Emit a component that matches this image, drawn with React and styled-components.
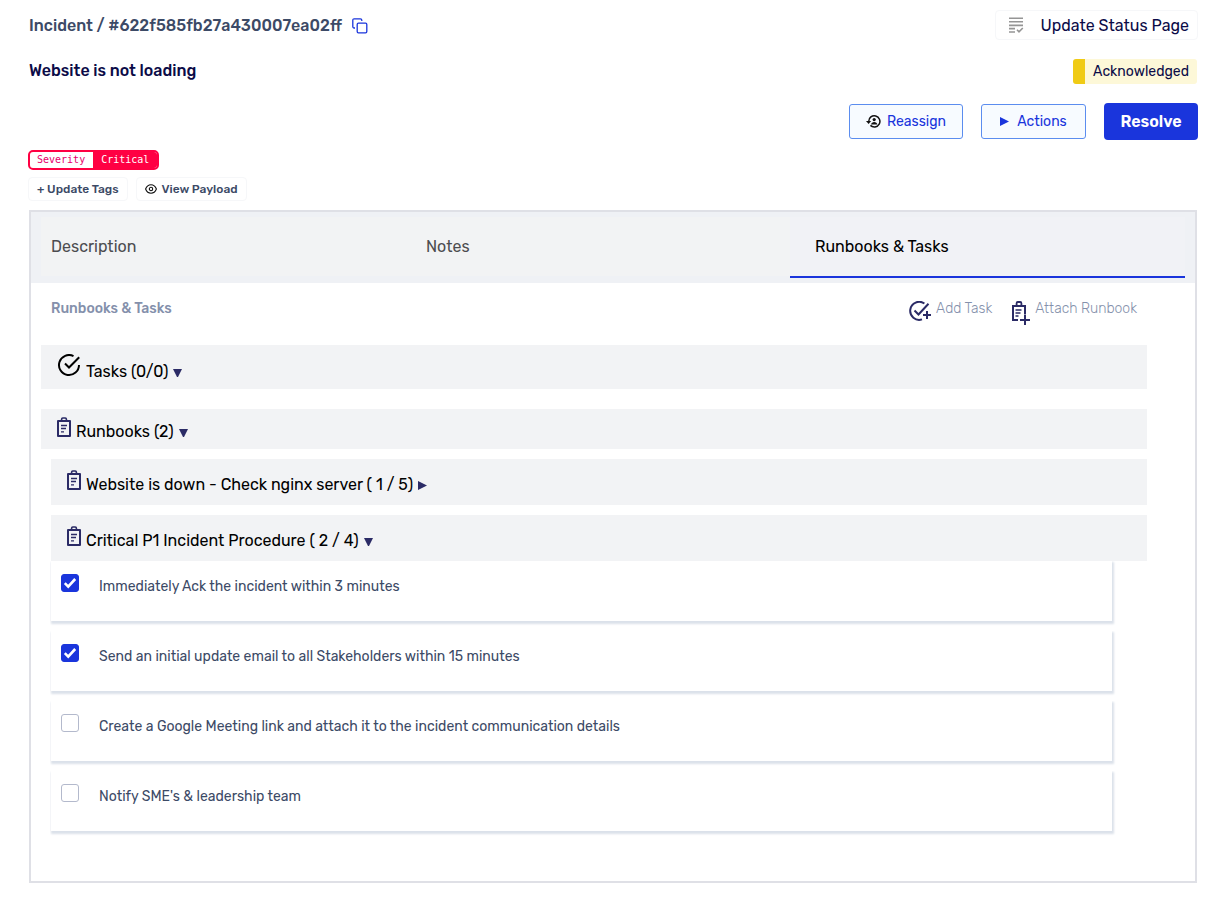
import React, { useState } from "react";
import styled, { createGlobalStyle, css } from "styled-components";

const GlobalStyle = createGlobalStyle`
  * { box-sizing: border-box; }
  body {
    margin: 0;
    background: #fff;
    color: #000;
    font-family: Rubik, Roboto, "Liberation Sans", sans-serif;
  }
  button { font-family: inherit; cursor: pointer; }
  svg { display: block; flex: none; }
`;

const Page = styled.main`
  padding: 10px 11px 20px 29px;
`;

const Row = styled.div`
  display: flex;
  align-items: ${(p) => p.$align || "center"};
  justify-content: ${(p) => (p.$end ? "flex-end" : "space-between")};
  gap: 18px;
  min-height: ${(p) => p.$height}px;
  margin-bottom: ${(p) => p.$gap}px;
`;

const Crumb = styled.div`
  display: flex;
  align-items: center;
  gap: 10px;
  padding-top: 2px;
  font-size: 16px;
  line-height: 20px;
  font-weight: 500;
  color: #3c4a66;
`;

const IconButton = styled.button`
  padding: 0;
  border: 0;
  background: none;
`;

const Title = styled.h1`
  margin: 0;
  font-size: 16px;
  line-height: 24px;
  font-weight: 500;
  color: #0b0b47;
`;

const GhostButton = styled.button`
  display: flex;
  align-items: center;
  background: #fff;
  border: 1px solid #f6f7f9;
  border-radius: 4px;
  ${(p) =>
    p.$small
      ? css`
          gap: 5px;
          height: 24px;
          padding: 0 8px;
          font-size: 12px;
          font-weight: 500;
          color: #3c4a66;
        `
      : css`
          gap: 16px;
          height: 30px;
          padding: 0 8px 0 12px;
          font-size: 16px;
          color: #0b0b47;
        `}
`;

const Status = styled.span`
  margin-right: 1px;
  padding: 0 8px;
  border-left: 12px solid #f0cb15;
  border-radius: 3px;
  background: #fdf8d8;
  font-size: 14px;
  line-height: 25px;
  color: #0b0b47;
`;

const OutlineButton = styled.button`
  display: flex;
  align-items: center;
  justify-content: center;
  gap: ${(p) => p.$gap}px;
  height: 35px;
  min-width: ${(p) => p.$width}px;
  padding-bottom: 2px;
  border: 1px solid #5b8def;
  border-radius: 3px;
  background: #f7fbff;
  font-size: 14px;
  color: #1a35dc;
`;

const SolidButton = styled.button`
  height: 37px;
  min-width: 94px;
  border: 0;
  border-radius: 4px;
  background: #1a35dc;
  font-size: 16px;
  font-weight: 600;
  color: #fff;
`;

const Tag = styled.div`
  display: flex;
  width: max-content;
  margin: 0 0 7px -1px;
  overflow: hidden;
  border: 2px solid #ff0043;
  border-radius: 5px;
  font-family: "DejaVu Sans Mono", monospace;
  font-size: 10px;
  line-height: 16px;
`;

const TagName = styled.span`
  padding: 0 8px 0 7px;
  color: #e6006c;
`;

const TagValue = styled.span`
  padding: 0 8px;
  background: #ff0043;
  color: #fff;
`;

const TagActions = styled.div`
  display: flex;
  gap: 8px;
  margin: 0 0 9px -1px;
`;

const Panel = styled.section`
  margin-right: 1px;
  border: 2px solid #dfe0e6;
`;

const Tabs = styled.div`
  display: grid;
  grid-template-columns: 360fr 389fr 395fr;
  padding: 5px 10px;
  background: #eff1f5;
`;

const Tab = styled.button`
  height: 61px;
  padding: 0 25px;
  border: 0;
  border-bottom: 2px solid ${(p) => (p.$active ? "#1a35dc" : "transparent")};
  background: ${(p) => (p.$active ? "#f1f2f6" : "#f2f3f4")};
  background-clip: padding-box;
  font-size: 16px;
  text-align: left;
  color: ${(p) => (p.$active ? "#000" : "#4c4c4f")};
  &:first-child { padding-left: 10px; }
`;

const Body = styled.div`
  padding: 0 48px 50px 10px;
`;

const BodyHead = styled.div`
  display: flex;
  align-items: flex-start;
  justify-content: space-between;
  height: 62px;
  padding: 15px 10px 0;
`;

const BodyTitle = styled.h2`
  margin: 0;
  font-size: 14px;
  line-height: 22px;
  font-weight: 500;
  color: #8490ab;
`;

const Links = styled.div`
  display: flex;
  gap: 19px;
`;

const LinkButton = styled.button`
  display: flex;
  align-items: flex-start;
  gap: 5px;
  padding: 0;
  border: 0;
  background: none;
  font-size: 14px;
  line-height: 22px;
  font-weight: 300;
  color: #8490ab;
  svg { margin-top: 3px; }
`;

const Bar = styled.button`
  display: flex;
  align-items: flex-end;
  width: 100%;
  gap: 4px;
  height: ${(p) => p.$height}px;
  padding: 0 15px ${(p) => p.$bottom}px;
  border: 0;
  background: #f2f3f5;
  font-size: 16px;
  line-height: 20px;
  text-align: left;
  color: #000;
  > svg { margin-bottom: 5px; }
  > svg:last-child { margin-left: 1px; }
`;

const Group = styled.div`
  display: grid;
  gap: 10px;
  margin-top: 20px;
`;

const Nested = styled.div`
  padding-left: 10px;
`;

const CheckList = styled.ul`
  display: grid;
  gap: 10px;
  margin: 0 35px 0 0;
  padding: 0;
  list-style: none;
`;

const CheckItem = styled.label`
  display: flex;
  align-items: flex-start;
  gap: 20px;
  height: 60px;
  padding: 13px 10px 0;
  background: #fff;
  box-shadow: 1px 2px 2px 1px #dbe1ea;
  clip-path: inset(0 -6px -8px -1px);
  font-size: 14px;
  line-height: 26px;
  color: #3c4a66;
`;

const Box = styled.span`
  display: grid;
  > * { grid-area: 1 / 1; }
  svg { pointer-events: none; }
`;

const Check = styled.input`
  appearance: none;
  width: 18px;
  height: 18px;
  margin: 0;
  border: 1px solid #b3b9cc;
  border-radius: 3px;
  background: #fff;
  &:checked {
    border-color: #1a35dc;
    background: #1a35dc;
  }
`;

const CopyIcon = () => (
  <svg width="16" height="16" viewBox="0 0 16 16" fill="none" stroke="#1a35dc" strokeWidth="1.3">
    <rect x="5.2" y="5.2" width="9.6" height="9.6" rx="1.2" />
    <path d="M3 10H2.2Q.8 10 .8 8.6V2.2Q.8.8 2.2.8h6.2Q9.8.8 9.8 2.2V3" />
  </svg>
);

const ListIcon = () => (
  <svg width="16" height="16" viewBox="0 0 16 16" fill="none" stroke="#959595" strokeWidth="1.6">
    <path d="M1 1.2h14M1 4.8h14M1 8.4h14M1 11.6h6M1 15h6M9 12.8l2 2 3.8-3.8" />
  </svg>
);

const ReassignIcon = () => (
  <svg width="15" height="14" viewBox="0 0 15 14" fill="none" stroke="#111" strokeWidth="1.5">
    <path d="M2.7 7.4A5.6 5.6 0 1 1 4.4 11.4" />
    <path d="M0 7.1h5.2L2.6 10z" fill="#111" stroke="none" />
    <circle cx="8.2" cy="5.6" r="1.6" fill="#111" stroke="none" />
    <path d="M5 10.6c.4-3.6 6-3.6 6.4 0z" fill="#111" stroke="none" />
  </svg>
);

const EyeIcon = () => (
  <svg width="12" height="12" viewBox="0 0 12 12" fill="none" stroke="#111" strokeWidth="1.1">
    <path d="M.6 6C2.8.4 9.2.4 11.4 6 9.2 11.6 2.8 11.6.6 6z" />
    <circle cx="6" cy="6" r="1.7" />
  </svg>
);

const TaskIcon = () => (
  <svg width="26" height="23" viewBox="-2 -1 26 23" fill="none" stroke="#000" strokeWidth="2">
    <path d="M15.5 1.1A10 10 0 1 0 21 10M7 8.5l4 4L21.2 2.2" />
  </svg>
);

const AddTaskIcon = () => (
  <svg width="22" height="20" viewBox="0 0 22 20" fill="none" stroke="#2b2b66" strokeWidth="2">
    <path d="M15.4 2.5A9 9 0 1 0 13 18.4M5.5 9.5l4 4L19.5 2.8M18 10v8M14 14h8" />
  </svg>
);

const ClipboardIcon = () => (
  <svg width="16" height="20" viewBox="0 0 16 20" fill="none" stroke="#2b2b66" strokeWidth="2">
    <path d="M2 4h12v15H2z" strokeLinejoin="round" />
    <path d="M5.6 4V2.2Q5.6 1 6.8 1h2.4q1.2 0 1.2 1.2V4" strokeWidth="1.6" />
    <path d="M5 8.5h6M5 11.5h5M5 14.8h3" strokeWidth="1.3" />
  </svg>
);

const AttachIcon = () => (
  <svg width="19" height="24" viewBox="0 0 19 24" fill="none" stroke="#2b2b66" strokeWidth="2">
    <path d="M7 19H2V5h12v8.5M14 14v10M9 19h10" />
    <path d="M5.6 4V2.2Q5.6 1 6.8 1h2.4q1.2 0 1.2 1.2V4" strokeWidth="1.8" />
    <path d="M4.5 9h6M4.5 12h5M4.5 15h3" strokeWidth="1.3" />
  </svg>
);

const Caret = ({ right, color = "#2b2b66" }) => (
  <svg width="9" height="9" viewBox="0 0 9 9" fill={color}>
    <path d={right ? "M0 0l9 4.5L0 9z" : "M0 1h9L5 9H4z"} />
  </svg>
);

const Tick = () => (
  <svg width="18" height="18" viewBox="0 0 18 18" fill="none" stroke="#fff" strokeWidth="2.6">
    <path d="M3.8 9.2l3.4 3.4 7-7.6" />
  </svg>
);

const INITIAL_STEPS = [
  { text: "Immediately Ack the incident within 3 minutes", done: true },
  { text: "Send an initial update email to all Stakeholders within 15 minutes", done: true },
  { text: "Create a Google Meeting link and attach it to the incident communication details", done: false },
  { text: "Notify SME's & leadership team", done: false },
];

const TABS = ["Description", "Notes", "Runbooks & Tasks"];

export default function App() {
  const [steps, setSteps] = useState(INITIAL_STEPS);
  const [tab, setTab] = useState(2);
  const toggle = (index) =>
    setSteps(steps.map((s, i) => (i === index ? { ...s, done: !s.done } : s)));

  return (
    <>
      <GlobalStyle />
      <Page>
        <Row $height={30} $gap={19}>
          <Crumb>
            Incident / #622f585fb27a430007ea02ff
            <IconButton aria-label="Copy incident id"><CopyIcon /></IconButton>
          </Crumb>
          <GhostButton><ListIcon />Update Status Page</GhostButton>
        </Row>
        <Row $height={25} $gap={19} $align="flex-start">
          <Title>Website is not loading</Title>
          <Status>Acknowledged</Status>
        </Row>
        <Row $height={37} $gap={10} $end>
          <OutlineButton $width={114} $gap={6}><ReassignIcon />Reassign</OutlineButton>
          <OutlineButton $width={105} $gap={8}><Caret right color="#1a35dc" />Actions</OutlineButton>
          <SolidButton>Resolve</SolidButton>
        </Row>
        <Tag>
          <TagName>Severity</TagName>
          <TagValue>Critical</TagValue>
        </Tag>
        <TagActions>
          <GhostButton $small>+ Update Tags</GhostButton>
          <GhostButton $small><EyeIcon />View Payload</GhostButton>
        </TagActions>
        <Panel>
          <Tabs role="tablist">
            {TABS.map((name, i) => (
              <Tab key={name} role="tab" aria-selected={i === tab} $active={i === tab} onClick={() => setTab(i)}>
                {name}
              </Tab>
            ))}
          </Tabs>
          <Body>
            <BodyHead>
              <BodyTitle>Runbooks &amp; Tasks</BodyTitle>
              <Links>
                <LinkButton><AddTaskIcon />Add Task</LinkButton>
                <LinkButton><AttachIcon />Attach Runbook</LinkButton>
              </Links>
            </BodyHead>
            <Bar $height={44} $bottom={7}><TaskIcon />Tasks (0/0)<Caret /></Bar>
            <Group>
              <Bar $height={40} $bottom={7}><ClipboardIcon />Runbooks (2)<Caret /></Bar>
              <Nested>
                <Bar $height={46} $bottom={10}><ClipboardIcon />Website is down - Check nginx server ( 1 / 5)<Caret right /></Bar>
              </Nested>
              <Nested>
                <Bar $height={46} $bottom={10}><ClipboardIcon />Critical P1 Incident Procedure ( 2 / 4)<Caret /></Bar>
                <CheckList>
                  {steps.map((step, i) => (
                    <li key={step.text}>
                      <CheckItem>
                        <Box>
                          <Check type="checkbox" checked={step.done} onChange={() => toggle(i)} />
                          {step.done && <Tick />}
                        </Box>
                        {step.text}
                      </CheckItem>
                    </li>
                  ))}
                </CheckList>
              </Nested>
            </Group>
          </Body>
        </Panel>
      </Page>
    </>
  );
}
